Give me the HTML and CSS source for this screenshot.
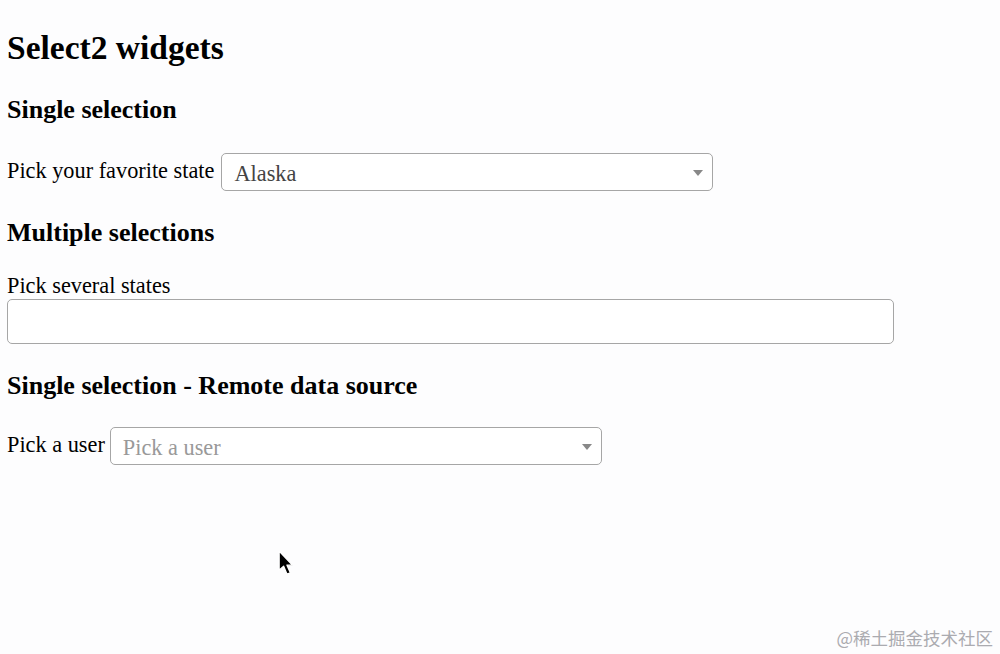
FILE: index.html
```html
<!DOCTYPE html>
<html>
<head>
<meta charset="utf-8">
<link rel="stylesheet" href="styles.css">
</head>
<body>
<div class="page">
  <h1 class="title">Select2 widgets</h1>
  <h2 class="section first">Single selection</h2>
  <div class="row">
    <span class="label">Pick your favorite state</span>
    <div class="select single w491">
      <span class="value">Alaska</span>
      <span class="arrow"></span>
    </div>
  </div>
  <h2 class="section">Multiple selections</h2>
  <div class="label block">Pick several states</div>
  <div class="select multi"></div>
  <h2 class="section after-multi">Single selection - Remote data source</h2>
  <div class="row remote">
    <span class="label">Pick a user</span>
    <div class="select single w492">
      <span class="value placeholder">Pick a user</span>
      <span class="arrow"></span>
    </div>
  </div>
</div>
<svg class="cursor" width="18" height="27" viewBox="0 0 16 24"><path d="M1 1 L1 18 L5 14.5 L8 21.5 L11 20.3 L8 13.5 L13 13.5 Z" fill="#000" stroke="#fff" stroke-width="1.2" stroke-linejoin="round"/></svg>
<div class="watermark">@稀土掘金技术社区</div>
</body>
</html>
```
FILE: styles.css
```css
html, body {
  margin: 0;
  background: #fdfdfe;
}
body {
  font-family: "Liberation Serif", "Times New Roman", serif;
  color: #000;
  width: 1000px;
  height: 654px;
  position: relative;
  overflow: hidden;
}
.page {
  padding: 8px 7px;
  display: flex;
  flex-direction: column;
  align-items: flex-start;
}
.title {
  font-size: 33.5px;
  line-height: 36px;
  margin: 22px 0 0;
  font-weight: bold;
}
.section {
  font-size: 26px;
  line-height: 28px;
  margin: 29px 0 0;
  font-weight: bold;
}
.section.first {
  margin-top: 30px;
}
.section.after-multi {
  margin-top: 28px;
}
.row {
  display: flex;
  align-items: center;
  gap: 7px;
  margin-top: 29px;
}
.row.remote {
  margin-top: 27px;
  gap: 5px;
}
.label {
  font-size: 22.3px;
  line-height: 24px;
  margin-bottom: 3px;
}
.label.block {
  margin-top: 27px;
  margin-bottom: 1px;
}
.select {
  box-sizing: border-box;
  border: 1.5px solid #a6a6a6;
  border-radius: 5px;
  background: #fff;
  position: relative;
}
.single {
  height: 38px;
  display: flex;
  align-items: center;
  padding-left: 12px;
}
.w491 { width: 492px; }
.w492 { width: 492px; }
.value {
  font-size: 22.3px;
  color: #444;
  margin-top: 3px;
}
.placeholder {
  color: #999;
}
.arrow {
  position: absolute;
  right: 9px;
  top: 16px;
  width: 0;
  height: 0;
  border-left: 5px solid transparent;
  border-right: 5px solid transparent;
  border-top: 6px solid #888;
}
.multi {
  width: 887px;
  height: 45px;
}
.row + .section {
  margin-top: 28px;
}
.cursor {
  position: absolute;
  left: 278px;
  top: 550px;
}
.watermark {
  position: absolute;
  right: 7px;
  top: 625px;
  font-family: "Noto Sans CJK SC", sans-serif;
  font-size: 17.5px;
  color: #ababb0;
}
```
